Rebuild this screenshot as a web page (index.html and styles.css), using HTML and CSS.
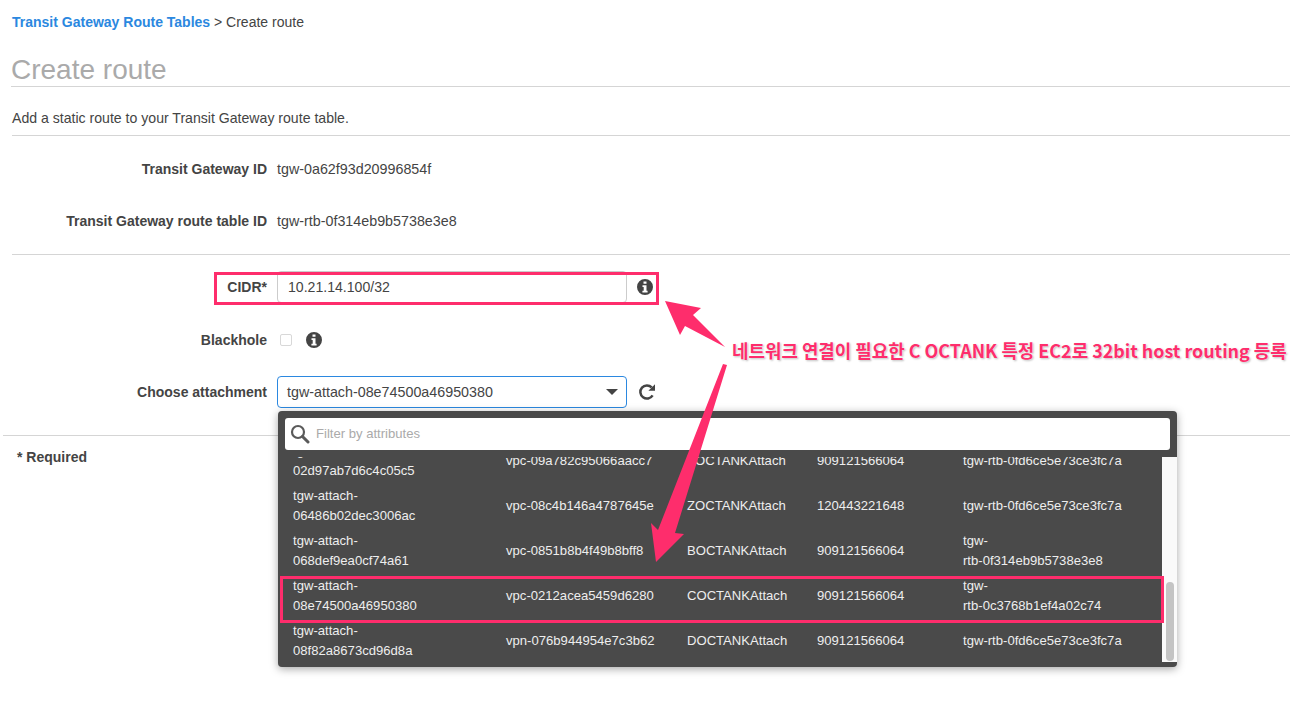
FILE: index.html
```html
<!DOCTYPE html>
<html lang="en">

<head>
    <meta charset="UTF-8">
    <meta name="viewport" content="width=device-width, initial-scale=1.0">
    <title>Create route</title>
    <link rel="stylesheet" href="styles.css">
</head>

<body>
    <div class="breadcrumb"><a href="#">Transit Gateway Route Tables</a> &gt; Create route</div>
    <h1>Create route</h1>
    <p class="intro">Add a static route to your Transit Gateway route table.</p>

    <div class="info-section">
        <div class="row">
            <label>Transit Gateway ID</label>
            <span>tgw-0a62f93d20996854f</span>
        </div>
        <div class="row">
            <label>Transit Gateway route table ID</label>
            <span>tgw-rtb-0f314eb9b5738e3e8</span>
        </div>
    </div>

    <div class="form-section">
        <div class="row">
            <label>CIDR*</label>
            <div class="text-input">10.21.14.100/32</div>
            <svg class="icon info-after-input" viewBox="0 0 16 16"><path fill-rule="evenodd" d="M8 0a8 8 0 1 0 0 16A8 8 0 0 0 8 0zM6.5 2.5h3v2.2h-3zM5.5 6.3h4v5.4h1.1v1.8H5.4v-1.8h1.3V8.1H5.5z"/></svg>
        </div>
        <div class="row row-tall">
            <label>Blackhole</label>
            <span class="checkbox"></span>
            <svg class="icon info-after-check" viewBox="0 0 16 16"><path fill-rule="evenodd" d="M8 0a8 8 0 1 0 0 16A8 8 0 0 0 8 0zM6.5 2.5h3v2.2h-3zM5.5 6.3h4v5.4h1.1v1.8H5.4v-1.8h1.3V8.1H5.5z"/></svg>
        </div>
        <div class="row">
            <label>Choose attachment</label>
            <div class="select">
                tgw-attach-08e74500a46950380
                <span class="caret"></span>

                <!-- open dropdown -->
                <div class="menu">
                    <div class="filter">
                        <svg class="search-icon" viewBox="0 0 20 20"><circle cx="8" cy="8" r="6" fill="none" stroke="#5a5a5a" stroke-width="2.2"/><path d="M12.5 12.5l5.5 5.5" stroke="#5a5a5a" stroke-width="3" stroke-linecap="round"/></svg>
                        <span>Filter by attributes</span>
                    </div>
                    <div class="list">
                        <div class="rows">
                            <div class="option">
                                <span>tgw-attach-<br>02d97ab7d6c4c05c5</span>
                                <span>vpc-09a782c95066aacc7</span>
                                <span>ZOCTANKAttach</span>
                                <span>909121566064</span>
                                <span>tgw-rtb-0fd6ce5e73ce3fc7a</span>
                            </div>
                            <div class="option">
                                <span>tgw-attach-<br>06486b02dec3006ac</span>
                                <span>vpc-08c4b146a4787645e</span>
                                <span>ZOCTANKAttach</span>
                                <span>120443221648</span>
                                <span>tgw-rtb-0fd6ce5e73ce3fc7a</span>
                            </div>
                            <div class="option">
                                <span>tgw-attach-<br>068def9ea0cf74a61</span>
                                <span>vpc-0851b8b4f49b8bff8</span>
                                <span>BOCTANKAttach</span>
                                <span>909121566064</span>
                                <span>tgw-<br>rtb-0f314eb9b5738e3e8</span>
                            </div>
                            <div class="option">
                                <span>tgw-attach-<br>08e74500a46950380</span>
                                <span>vpc-0212acea5459d6280</span>
                                <span>COCTANKAttach</span>
                                <span>909121566064</span>
                                <span>tgw-<br>rtb-0c3768b1ef4a02c74</span>
                            </div>
                            <div class="option">
                                <span>tgw-attach-<br>08f82a8673cd96d8a</span>
                                <span>vpn-076b944954e7c3b62</span>
                                <span>DOCTANKAttach</span>
                                <span>909121566064</span>
                                <span>tgw-rtb-0fd6ce5e73ce3fc7a</span>
                            </div>
                        </div>
                        <div class="scroll-track"><div class="scroll-thumb"></div></div>
                    </div>
                </div>
            </div>
            <svg class="icon refresh" viewBox="0 0 18 18"><path d="M14.6 12.4A6.6 6.6 0 1 1 13.7 4.4" fill="none" stroke-width="2.5"/><path d="M17 1.2v6.6h-6.6z" stroke="none"/></svg>
        </div>
    </div>

    <div class="required">* Required</div>

    <!-- annotations on top of the screenshot -->
    <div class="mark mark-cidr"></div>
    <div class="mark mark-row"></div>
    <svg class="arrows" viewBox="0 0 1297 726">
        <polygon points="665,301 701,308 693,315 725,347 685,326 680,335"/>
        <polygon points="723,364 727,365 675,533 684,534 656,562 651,523 658,530"/>
    </svg>
    <div class="note">네트워크 연결이 필요한 C OCTANK 특정 EC2로 32bit host routing 등록</div>
</body>
</html>
```

FILE: styles.css
```css
html, body {
    margin: 0;
    height: 726px;
    overflow: hidden;
}

body {
    position: relative;
    font-family: "Liberation Sans", Arial, sans-serif;
    font-size: 14.1px;
    color: #444;
    background: white;
}

.breadcrumb {
    padding: 14px 12px 0;
    font-size: 14px;
    line-height: 16px;
}

.breadcrumb a {
    color: #2b88e0;
    font-weight: bold;
    text-decoration: none;
}

h1 {
    margin: 21px 7px 0 11px;
    height: 35px;
    font-size: 28px;
    font-weight: normal;
    line-height: 38px;
    color: #aaa;
    border-bottom: 1px solid #d5d5d5;
}

.intro {
    margin: 0 7px 0 12px;
    padding: 23px 0 9px;
    line-height: 16px;
    border-bottom: 1px solid #d5d5d5;
}

.info-section {
    margin: 7px 7px 0 12px;
    padding-bottom: 7px;
    border-bottom: 1px solid #d5d5d5;
}

.form-section {
    margin: 6px 7px 0 3px;
    padding-left: 9px;
    padding-bottom: 17px;
    border-bottom: 1px solid #d5d5d5;
}

.row {
    display: flex;
    align-items: center;
    height: 52px;
    font-size: 14.3px;
}

.row-tall {
    height: 53px;
}

.row label {
    width: 255px;
    margin-right: 10px;
    text-align: right;
    font-size: 14px;
    font-weight: bold;
}

.text-input {
    box-sizing: border-box;
    width: 350px;
    height: 32px;
    padding-left: 10px;
    line-height: 30px;
    font-size: 14.1px;
    border: 1px solid #ccc;
    border-radius: 4px;
}

.icon {
    fill: #444;
    stroke: #444;
    stroke-width: 0;
}

.info-after-input {
    width: 16px;
    height: 16px;
    margin-left: 10px;
}

.checkbox {
    box-sizing: border-box;
    width: 12px;
    height: 12px;
    margin-left: 3px;
    border: 1px solid #d8d8d8;
    border-radius: 2px;
}

.info-after-check {
    width: 16px;
    height: 16px;
    margin-left: 14px;
}

.select {
    position: relative;
    box-sizing: border-box;
    width: 350px;
    height: 32px;
    padding-left: 9px;
    line-height: 30px;
    border: 1px solid #2b88e0;
    border-radius: 4px;
}

.caret {
    position: absolute;
    right: 8px;
    top: 12px;
    border-left: 6px solid transparent;
    border-right: 6px solid transparent;
    border-top: 6px solid #444;
}

.refresh {
    width: 18px;
    height: 18px;
    margin-left: 11px;
}

.menu {
    position: absolute;
    left: 0;
    top: 34px;
    z-index: 1;
    width: 899px;
    height: 256px;
    background: #4a4a4a;
    border-radius: 4px;
    box-shadow: 0 2px 8px rgba(0, 0, 0, 0.35);
    color: #eee;
    font-size: 13.1px;
    line-height: 20px;
}

.filter {
    display: flex;
    align-items: center;
    box-sizing: border-box;
    height: 32px;
    margin: 7px 7px 7px 7px;
    padding-left: 5px;
    background: white;
    border-radius: 3px;
    color: #aaa;
}

.search-icon {
    width: 20px;
    height: 20px;
    margin-right: 6px;
}

.list {
    display: flex;
    height: 205px;
    overflow: hidden;
}

.rows {
    flex: 1;
    margin-top: -18.5px;
}

.option {
    display: grid;
    grid-template-columns: 213px 181px 130px 146px 1fr;
    align-items: center;
    height: 45px;
    padding-left: 15px;
}

.scroll-track {
    box-sizing: border-box;
    width: 15px;
    padding: 125px 3px 1px 4px;
    background: #fafafa;
}

.scroll-thumb {
    height: 79px;
    background: #c4c4c4;
    border-radius: 4px;
}

.required {
    padding: 13px 0 0 17px;
    font-size: 14px;
    font-weight: bold;
    line-height: 16px;
}

.mark {
    position: absolute;
    z-index: 2;
    box-sizing: border-box;
    border: 3px solid #fe2d6c;
}

.mark-cidr {
    left: 214px;
    top: 272px;
    width: 445px;
    height: 33px;
}

.mark-row {
    left: 280px;
    top: 576px;
    width: 884px;
    height: 47px;
}

.arrows {
    position: absolute;
    left: 0;
    top: 0;
    z-index: 3;
    width: 1297px;
    height: 726px;
    fill: #fe2d6c;
    pointer-events: none;
}

.note {
    position: absolute;
    left: 732px;
    top: 339px;
    z-index: 4;
    font-family: "Noto Sans CJK KR", "Liberation Sans", sans-serif;
    font-size: 17.9px;
    font-weight: bold;
    line-height: 22px;
    white-space: nowrap;
    color: #fe2d6c;
    text-shadow: 0 0 2px white, 1px 1px 2px rgba(0, 0, 0, 0.3);
}
```
